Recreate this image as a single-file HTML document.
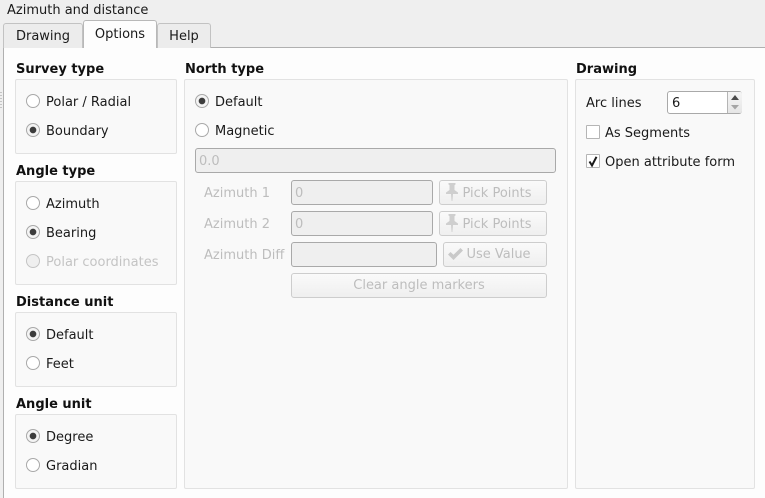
<!DOCTYPE html>
<html><head><meta charset="utf-8">
<style>
html,body{margin:0;padding:0;height:498px;overflow:hidden}
#w{position:absolute;left:0;top:0;width:765px;height:498px;overflow:hidden;background:#efefef;font-family:"DejaVu Sans",sans-serif;font-size:13px;color:#1a1a1a}
.t{position:absolute;white-space:nowrap;line-height:16px}
.b{font-weight:bold;color:#111}
.d{color:#bdbdbd}
.pane{position:absolute;left:3px;top:47px;width:770px;height:460px;background:#fdfdfd;border:1px solid #b0b0b0;box-sizing:border-box}
.tab{position:absolute;box-sizing:border-box;border:1px solid #c2c2c2;border-bottom:none;border-radius:3px 3px 0 0;background:#ececec;text-align:center;line-height:25px}
.g{position:absolute;box-sizing:border-box;background:#f9f9f9;border:1px solid #e2e2e2;border-radius:2px}
.r{position:absolute;width:14px;height:14px;box-sizing:border-box;border:1px solid #a8a8a8;border-radius:50%;background:#fff}
.r.on{background:radial-gradient(circle,#3c3c3c 0,#3c3c3c 3px,#f4f4f4 3.6px)}
.r.dis{background:#efefef;border-color:#c4c4c4}
.e{position:absolute;box-sizing:border-box;background:#efefef;border:1px solid #a9a9a9;border-radius:3px;color:#bdbdbd;padding-left:3px;line-height:25px;height:25px}
.btn{position:absolute;box-sizing:border-box;height:25px;background:linear-gradient(#fafafa,#efefef);border:1px solid #cdcdcd;border-radius:3px;color:#bdbdbd;line-height:24px;text-align:center;white-space:nowrap}
.p{line-height:25px}
.c{position:absolute;width:14px;height:14px;box-sizing:border-box;border:1px solid #b5b5b5;background:#fff;border-radius:1px}
svg{position:absolute}
</style></head><body><div id="w">
<div class="t" style="left:7px;top:3px">Azimuth and distance</div>
<div style="position:absolute;left:0;top:92px;width:2px;height:18px;background:repeating-linear-gradient(#c4c4c4 0 1px,transparent 1px 3px)"></div>
<div class="pane"></div>
<div class="tab" style="left:3px;top:23px;width:80px;height:25px">Drawing</div>
<div class="tab" style="left:157px;top:23px;width:54px;height:25px">Help</div>
<div class="tab" style="left:83px;top:20px;width:74px;height:28px;background:#fdfdfd;line-height:27px;border-color:#b8b8b8">Options</div>

<div class="t b" style="left:16px;top:62px">Survey type</div>
<div class="g" style="left:15px;top:79px;width:162px;height:75px"></div>
<div class="r" style="left:26px;top:94px"></div><div class="t" style="left:46px;top:95px">Polar / Radial</div>
<div class="r on" style="left:26px;top:123px"></div><div class="t" style="left:46px;top:124px">Boundary</div>

<div class="t b" style="left:16px;top:164px">Angle type</div>
<div class="g" style="left:15px;top:181px;width:162px;height:104px"></div>
<div class="r" style="left:26px;top:196px"></div><div class="t" style="left:46px;top:197px">Azimuth</div>
<div class="r on" style="left:26px;top:225px"></div><div class="t" style="left:46px;top:226px">Bearing</div>
<div class="r dis" style="left:26px;top:254px"></div><div class="t d" style="left:46px;top:255px;color:#c4c4c4">Polar coordinates</div>

<div class="t b" style="left:16px;top:295px">Distance unit</div>
<div class="g" style="left:15px;top:312px;width:162px;height:75px"></div>
<div class="r on" style="left:26px;top:327px"></div><div class="t" style="left:46px;top:328px">Default</div>
<div class="r" style="left:26px;top:356px"></div><div class="t" style="left:46px;top:357px">Feet</div>

<div class="t b" style="left:16px;top:397px">Angle unit</div>
<div class="g" style="left:15px;top:414px;width:162px;height:75px"></div>
<div class="r on" style="left:26px;top:429px"></div><div class="t" style="left:46px;top:430px">Degree</div>
<div class="r" style="left:26px;top:458px"></div><div class="t" style="left:46px;top:459px">Gradian</div>

<div class="t b" style="left:185px;top:62px">North type</div>
<div class="g" style="left:184px;top:79px;width:384px;height:410px"></div>
<div class="r on" style="left:195px;top:94px"></div><div class="t" style="left:215px;top:95px">Default</div>
<div class="r" style="left:195px;top:123px"></div><div class="t" style="left:215px;top:124px">Magnetic</div>
<div class="e" style="left:195px;top:148px;width:361px">0.0</div>

<div class="t d" style="left:204px;top:186px">Azimuth 1</div>
<div class="e" style="left:291px;top:180px;width:142px">0</div>
<div class="btn p" style="left:439px;top:180px;width:108px;padding-left:8px">Pick Points</div>
<svg style="left:444px;top:182px" width="16" height="20" viewBox="0 0 16 20"><path d="M4.500 1h7v1.500l-1 .8v4.700L14 10.500v1.500H9l-.6 7h-.8L7 12H2v-1.500L5.500 8V3.300l-1-.8z" fill="#cfcfcf"/></svg>

<div class="t d" style="left:204px;top:217px">Azimuth 2</div>
<div class="e" style="left:291px;top:211px;width:142px">0</div>
<div class="btn p" style="left:439px;top:211px;width:108px;padding-left:8px">Pick Points</div>
<svg style="left:444px;top:213px" width="16" height="20" viewBox="0 0 16 20"><path d="M4.500 1h7v1.500l-1 .8v4.700L14 10.500v1.500H9l-.6 7h-.8L7 12H2v-1.500L5.500 8V3.300l-1-.8z" fill="#cfcfcf"/></svg>

<div class="t d" style="left:204px;top:248px">Azimuth Diff</div>
<div class="e" style="left:291px;top:242px;width:146px"></div>
<div class="btn" style="left:443px;top:242px;width:104px;padding-left:7px">Use Value</div>
<svg style="left:447px;top:247px" width="17" height="14" viewBox="0 0 17 14"><path d="M1 7.500l2.500-2.500 3 2.800L13.500 1 16 3.500 6.500 13z" fill="#c9c9c9"/></svg>

<div class="btn" style="left:291px;top:273px;width:256px">Clear angle markers</div>

<div class="t b" style="left:576px;top:62px">Drawing</div>
<div class="g" style="left:575px;top:79px;width:180px;height:410px"></div>
<div class="t" style="left:586px;top:96px">Arc lines</div>
<div style="position:absolute;left:667px;top:91px;width:75px;height:23px;box-sizing:border-box;background:#fff;border:1px solid #a9a9a9;border-radius:3px"></div>
<div style="position:absolute;left:727px;top:92px;width:14px;height:21px;background:linear-gradient(#f5f5f5,#e6e6e6);border-left:1px solid #b5b5b5;border-radius:0 2px 2px 0"></div>
<svg style="left:728px;top:92px" width="14" height="21" viewBox="0 0 14 21"><path d="M3 8l4-5 4 5z" fill="#4a4a4a"/><path d="M3 13h8l-4 4.500z" fill="#a5a5a5"/></svg>
<div class="t" style="left:672px;top:96px">6</div>
<div class="c" style="left:586px;top:125px"></div><div class="t" style="left:605px;top:126px">As Segments</div>
<div class="c" style="left:586px;top:154px"></div><div class="t" style="left:605px;top:155px">Open attribute form</div>
<svg style="left:586px;top:154px" width="14" height="14" viewBox="0 0 14 14"><path d="M3.500 7.500L6 11.500 10.500 2.800" fill="none" stroke="#1a1a1a" stroke-width="2"/></svg>
</div></body></html>
